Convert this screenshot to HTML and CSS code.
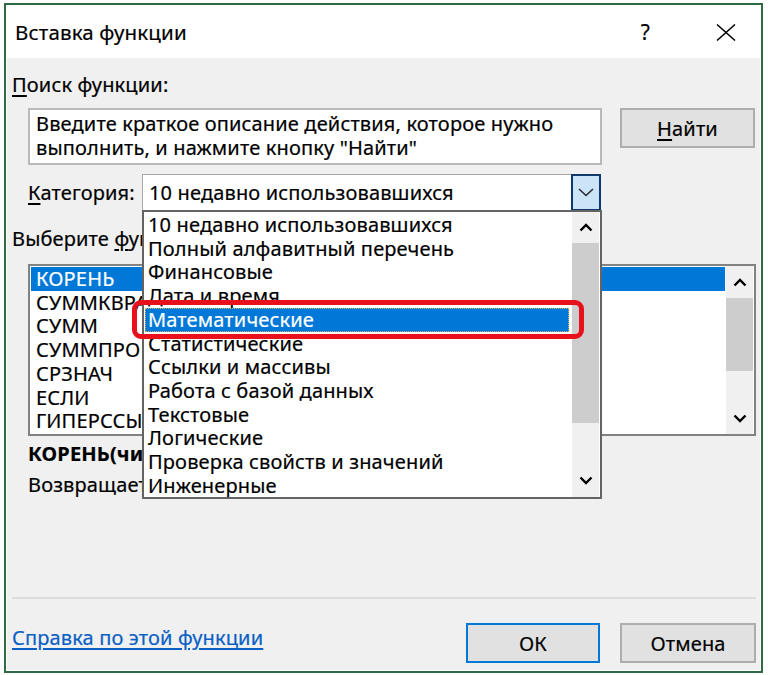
FILE: index.html
```html
<!DOCTYPE html>
<html lang="ru">
<head>
<meta charset="utf-8">
<title>Вставка функции</title>
<link rel="stylesheet" href="styles.css">
</head>
<body>
<div class="dialog">
  <div class="titlebar">
    <span class="title">Вставка функции</span>
    <span class="help">?</span>
    <span class="close"><svg width="20" height="17" viewBox="0 0 20 17"><path d="M1 0.5 L19 16.5 M19 0.5 L1 16.5" stroke="#000" stroke-width="1.5" fill="none"/></svg></span>
  </div>
  <div class="panel">
    <div class="content">
      <div class="label"><u>П</u>оиск функции:</div>
      <div class="search-row">
        <div class="search-box">Введите краткое описание действия, которое нужно<br>выполнить, и нажмите кнопку "Найти"</div>
        <div class="btn find"><u>Н</u>айти</div>
      </div>
      <div class="cat-row">
        <span class="cat-label"><u>К</u>атегория:</span>
        <div class="combo">
          <span class="combo-text">10 недавно использовавшихся</span>
          <span class="combo-btn"><svg width="16" height="9" viewBox="0 0 16 9"><polyline points="1,1 8,7.5 15,1" stroke="#2b2b2b" stroke-width="1.6" fill="none"/></svg></span>
          <div class="dropdown">
            <ul class="dd-items">
              <li>10 недавно использовавшихся</li>
              <li>Полный алфавитный перечень</li>
              <li>Финансовые</li>
              <li>Дата и время</li>
              <li class="sel">Математические</li>
              <li>Статистические</li>
              <li>Ссылки и массивы</li>
              <li>Работа с базой данных</li>
              <li>Текстовые</li>
              <li>Логические</li>
              <li>Проверка свойств и значений</li>
              <li>Инженерные</li>
            </ul>
            <div class="scroll dd-scroll">
              <div class="arrow up"><svg width="14" height="9" viewBox="0 0 14 9"><polyline points="1.5,7.5 7,2 12.5,7.5" stroke="#000" stroke-width="2.4" fill="none"/></svg></div>
              <div class="thumb"></div>
              <div class="track"></div>
              <div class="arrow down"><svg width="14" height="9" viewBox="0 0 14 9"><polyline points="1.5,1.5 7,7 12.5,1.5" stroke="#000" stroke-width="2.4" fill="none"/></svg></div>
            </div>
          </div>
          <div class="highlight"></div>
        </div>
      </div>
      <div class="label choose">Выберите <u>ф</u>ункцию:</div>
      <div class="funclist">
        <ul class="fl-items">
          <li class="sel">КОРЕНЬ</li>
          <li>СУММКВРАЗН</li>
          <li>СУММ</li>
          <li>СУММПРОИЗВ</li>
          <li>СРЗНАЧ</li>
          <li>ЕСЛИ</li>
          <li>ГИПЕРССЫЛКА</li>
        </ul>
        <div class="scroll fl-scroll">
          <div class="arrow up"><svg width="14" height="9" viewBox="0 0 14 9"><polyline points="1.5,7.5 7,2 12.5,7.5" stroke="#000" stroke-width="2.4" fill="none"/></svg></div>
          <div class="thumb"></div>
          <div class="track"></div>
          <div class="arrow down"><svg width="14" height="9" viewBox="0 0 14 9"><polyline points="1.5,1.5 7,7 12.5,1.5" stroke="#000" stroke-width="2.4" fill="none"/></svg></div>
        </div>
      </div>
      <div class="sig">КОРЕНЬ(число)</div>
      <div class="desc">Возвращает значение квадратного корня.</div>
    </div>
    <div class="footer">
      <a class="help-link" href="#">Справка по этой функции</a>
      <div class="buttons">
        <div class="btn ok">ОК</div>
        <div class="btn cancel">Отмена</div>
      </div>
    </div>
  </div>
</div>
</body>
</html>
```

FILE: styles.css
```css
* { box-sizing: border-box; }
html, body { margin: 0; padding: 0; background: #fff; }
body {
  font-family: "Noto Sans", "Open Sans", sans-serif;
  font-size: 20px;
  line-height: 24px;
  letter-spacing: 0.15px;
  color: #000;
  -webkit-text-stroke: 0.2px currentColor;
}
ul { list-style: none; margin: 0; padding: 0; }
u { text-decoration-thickness: 1.5px; text-underline-offset: 3px; }

.dialog {
  margin: 3px 0 0 4px;
  width: 759px;
  height: 670px;
  border: 2px solid #2f6a45;
  padding: 0 1px 1px 1px;
  background: #fff;
  display: flex;
  flex-direction: column;
}

.titlebar {
  height: 53px;
  flex: none;
  display: flex;
  align-items: center;
  padding: 1px 24px 0 8px;
  background: #fff;
}
.title { font-size: 20.5px; }
.help { margin-left: auto; margin-right: 66px; font-size: 21px; }
.close { display: flex; }

.panel {
  flex: 1;
  background: #f0f0f0;
  display: flex;
  flex-direction: column;
}

.content {
  flex: 1;
  padding: 15px 4px 0 5px;
}

.label { height: 24px; }

.search-row {
  margin: 11px 0 0 16px;
  display: flex;
  gap: 18px;
}
.search-box {
  width: 574px;
  height: 57px;
  background: #fff;
  border: 2px solid #b9b9b9;
  padding: 2px 6px;
}
.btn {
  background: #e1e1e1;
  border: 2px solid #adadad;
  text-align: center;
  line-height: 37px;
  height: 40px;
}
.find { width: 135px; }

.cat-row {
  margin: 9px 0 0 16px;
  display: flex;
  height: 37px;
}
.cat-label { width: 114px; line-height: 38px; }
.combo {
  position: relative;
  width: 460px;
  display: flex;
}
.combo-text {
  flex: 1;
  background: #fff;
  border: 1px solid #a6a6a6;
  border-right: none;
  padding-left: 6px;
  line-height: 36px;
}
.combo-btn {
  width: 30px;
  margin-right: 1px;
  background: #cce4f7;
  border: 2px solid #11386b;
  display: flex;
  align-items: center;
  justify-content: center;
}

.dropdown {
  position: absolute;
  left: 0;
  top: 36px;
  width: 460px;
  height: 289px;
  background: #fff;
  border: 2px solid #646464;
  display: flex;
  z-index: 2;
  overflow: hidden;
}
.dd-items { flex: 1; margin-right: 3px; padding-top: 1px; }
.dd-items li, .fl-items li {
  line-height: 23.73px;
  height: 23.73px;
  margin-left: 1px;
  padding-left: 3px;
  white-space: nowrap;
}
.dd-items li.sel {
  background: #0078d7;
  color: #fff;
  outline: 1px dotted #c9b46a;
  outline-offset: -1px;
}

.scroll {
  width: 27px;
  margin-right: 1px;
  display: flex;
  flex-direction: column;
  background: #f0f0f0;
}
.arrow {
  display: flex;
  align-items: center;
  justify-content: center;
  flex: none;
}
.thumb { background: #cdcdcd; flex: none; }
.track { flex: 1; }
.dd-scroll .up { height: 31px; }
.dd-scroll .thumb { height: 180px; }
.dd-scroll .down { height: 33px; }

.highlight {
  position: absolute;
  left: -10px;
  top: 126px;
  width: 452px;
  height: 39px;
  border: 5px solid #e8101b;
  border-radius: 9px;
  z-index: 3;
}

.choose { margin-top: 16px; }

.funclist {
  margin: 13px 0 0 16px;
  width: 728px;
  height: 172px;
  background: #fff;
  border: 2px solid #828282;
  display: flex;
}
.fl-items { flex: 1; margin-right: 1px; padding-top: 1px; }
.fl-items li { padding-left: 5px; }
.fl-items li.sel { background: #0078d7; color: #fff; }
.fl-scroll .up { height: 32px; }
.fl-scroll .thumb { height: 73px; }
.fl-scroll .down { height: 32px; }

.sig { margin: 6px 0 0 16px; font-weight: bold; }
.desc { margin: 7px 0 0 16px; }

.footer {
  flex: none;
  margin: 0 4px 0 5px;
  border-top: 2px solid #dcdcdc;
  padding: 24px 0 7px 0;
  display: flex;
  align-items: flex-start;
}
.help-link {
  margin-top: 3px;
  color: #0a5fc4;
  text-decoration: underline;
  text-decoration-thickness: 1.5px;
  text-underline-offset: 3px;
  -webkit-text-stroke: 0.2px #0a5fc4;
}
.buttons { margin-left: auto; display: flex; gap: 20px; }
.ok { width: 134px; border-color: #0078d7; }
.cancel { width: 136px; }
```
